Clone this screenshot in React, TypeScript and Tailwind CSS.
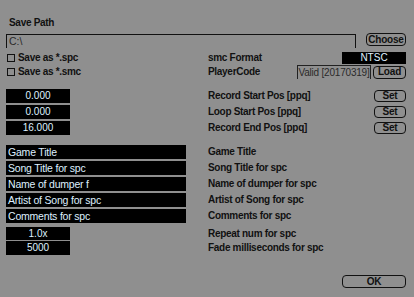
import React from "react";

const font = { fontFamily: '"Liberation Sans", Arial, sans-serif' };

function Btn({ label, w, h }: { label: string; w: string; h: string }) {
  return (
    <div
      className={`${w} ${h} flex items-center justify-center rounded-[4px] border-[1.5px] border-[#111] text-[10px] font-bold tracking-[-0.2px] text-[#111] leading-none`}
    >
      {label}
    </div>
  );
}

function Field({ text, w, h = "h-[14px]" }: { text: string; w: string; h?: string }) {
  return (
    <div className={`${w} ${h} bg-black flex items-center justify-center text-[10px] leading-none text-[#dff0ff]`}>
      {text}
    </div>
  );
}

function LField({ text }: { text: string }) {
  return (
    <div className="w-[180px] h-[14px] bg-black flex items-center pl-[2px] text-[10.5px] leading-none text-[#dff0ff] tracking-[-0.2px]">
      {text}
    </div>
  );
}

function Label({ children }: { children: React.ReactNode }) {
  return (
    <div className="text-[10px] font-bold leading-none text-[#111] tracking-[-0.3px] whitespace-nowrap">
      {children}
    </div>
  );
}

function Row({ left, right, h = "h-[14px]" }: { left: React.ReactNode; right: React.ReactNode; h?: string }) {
  return (
    <div className={`flex ${h} items-center`}>
      <div className="w-[202px] h-full flex items-center">{left}</div>
      <div className="flex-1 h-full flex items-center">{right}</div>
    </div>
  );
}

function Check({ label }: { label: string }) {
  return (
    <div className="flex items-center">
      <div className="w-[8px] h-[8px] border border-[#111] mr-[3px] ml-[1px]" />
      <Label>{label}</Label>
    </div>
  );
}

export default function App() {
  return (
    <div className="w-[414px] h-[297px] bg-[#8f8f8f] pl-[6px] pr-[8px] pt-[17px] flex flex-col" style={font}>
      <div className="ml-[3px] h-[11px] flex items-center">
        <Label>Save Path</Label>
      </div>
      <div className="flex h-[14px] mt-[5px] items-start">
        <div className="w-[350px] h-[14px] border-t border-l border-r border-[#111] mt-[1px] pl-[2px] text-[10.5px] leading-[12px] text-[#2a2a2a]">
          C:\
        </div>
        <div className="ml-auto">
          <Btn label="Choose" w="w-[40px]" h="h-[13px]" />
        </div>
      </div>
      <div className="mt-[4px]">
        <Row
          left={<Check label="Save as *.spc" />}
          right={
            <div className="flex w-full items-center">
              <Label>smc Format</Label>
              <div className="ml-auto w-[64px] h-[12px] bg-black flex items-center justify-center text-[10px] leading-none text-[#dff0ff]">
                NTSC
              </div>
            </div>
          }
        />
        <Row
          left={<Check label="Save as *.smc" />}
          right={
            <div className="flex w-full items-center">
              <Label>PlayerCode</Label>
              <div className="ml-auto w-[74px] h-[14px] border-t border-l border-r border-[#222] flex items-center justify-center text-[10px] leading-none text-[#2a2a2a] tracking-[-0.2px]">
                Valid [20170319]
              </div>
              <div className="ml-[2px]">
                <Btn label="Load" w="w-[33px]" h="h-[13px]" />
              </div>
            </div>
          }
        />
      </div>
      <div className="mt-[10px] flex flex-col gap-[2px]">
        {[
          ["0.000", "Record  Start Pos [ppq]"],
          ["0.000", "Loop  Start Pos [ppq]"],
          ["16.000", "Record End Pos [ppq]"],
        ].map(([v, l], i) => (
          <Row
            key={i}
            left={<Field text={v} w="w-[64px]" />}
            right={
              <div className="flex w-full items-center">
                <Label>{l}</Label>
                <div className="ml-auto">
                  <Btn label="Set" w="w-[32px]" h="h-[12px]" />
                </div>
              </div>
            }
          />
        ))}
      </div>
      <div className="mt-[10px] flex flex-col gap-[2px]">
        {[
          ["Game Title", "Game Title"],
          ["Song Title for spc", "Song Title for spc"],
          ["Name of dumper f", "Name of dumper for spc"],
          ["Artist of Song for spc", "Artist of Song for spc"],
          ["Comments for spc", "Comments for spc"],
        ].map(([v, l], i) => (
          <Row key={i} left={<LField text={v} />} right={<Label>{l}</Label>} />
        ))}
      </div>
      <div className="mt-[4px] flex flex-col gap-[1px]">
        <Row h="h-[13px]" left={<Field text="1.0x" w="w-[64px]" h="h-[13px]" />} right={<Label>Repeat num for spc</Label>} />
        <Row left={<Field text="5000" w="w-[64px]" />} right={<Label>Fade milliseconds for spc</Label>} />
      </div>
      <div className="mt-[20px] flex justify-end">
        <Btn label="OK" w="w-[64px]" h="h-[13px]" />
      </div>
    </div>
  );
}
